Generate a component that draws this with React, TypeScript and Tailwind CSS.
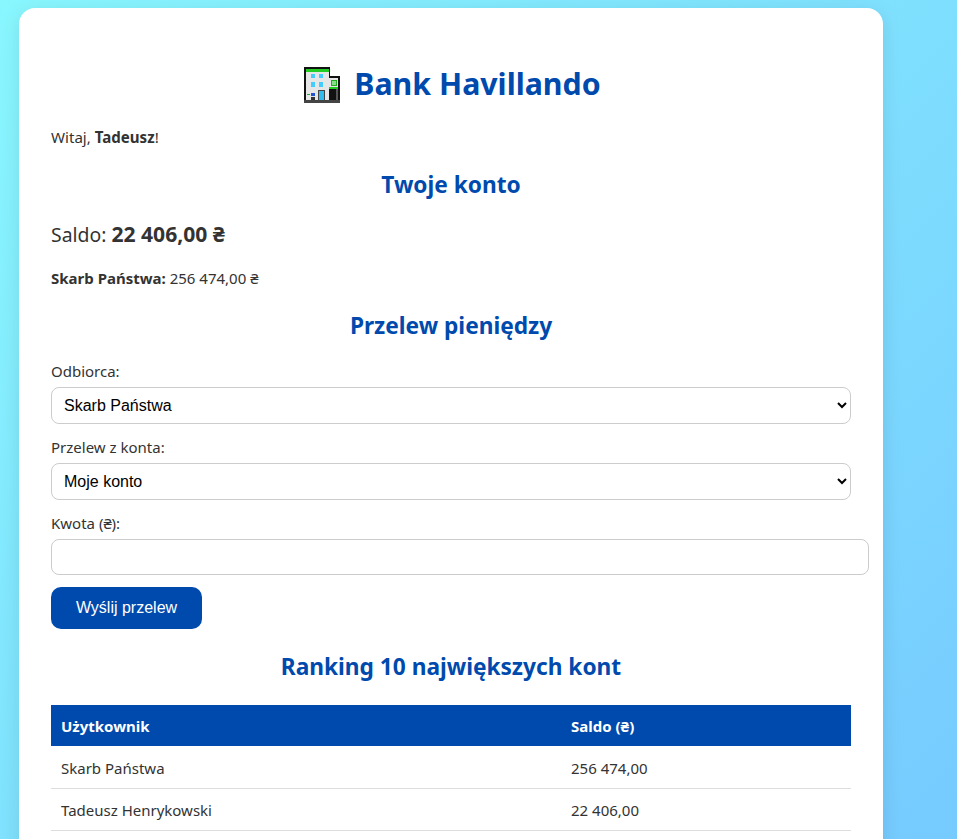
export default function App() {
  return (
    <div className="h-screen overflow-hidden bg-[linear-gradient(135deg,#89f7fe,#66a6ff)] bg-[length:957px_2300px] bg-no-repeat text-[#333] [font-family:'Noto_Sans',sans-serif]">
      <div className="ml-[19px] mt-2 min-h-[900px] w-[864px] rounded-2xl bg-white px-8 pt-8 shadow-[0_4px_20px_rgba(0,0,0,0.1)]">
        <h1 className="mt-[22px] mb-[21px] flex items-center justify-center gap-[14px] pl-[3px] text-[30.3px] leading-[44px] font-bold text-[#004aad]">
          <svg width="36" height="36" viewBox="0 0 36 36" className="mt-[2px] shrink-0" shapeRendering="crispEdges">
            <rect x="0" y="0" width="26" height="36" fill="#111" />
            <rect x="26" y="9" width="10" height="27" fill="#111" />
            <rect x="2" y="2" width="23" height="3" fill="#22cc22" />
            <rect x="2" y="5" width="23" height="28" fill="#e6e6e6" />
            <rect x="7" y="7" width="4" height="4" fill="#44ccff" />
            <rect x="15" y="7" width="4" height="4" fill="#44ccff" />
            <rect x="7" y="15" width="4" height="5" fill="#44ccff" />
            <rect x="15" y="15" width="4" height="5" fill="#44ccff" />
            <rect x="14" y="23" width="7" height="10" fill="#444" />
            <rect x="15" y="24" width="5" height="9" fill="#33bbee" />
            <rect x="3" y="27" width="3" height="1" fill="#22aa44" />
            <rect x="7" y="26" width="4" height="3" fill="#2255cc" />
            <rect x="7" y="30" width="4" height="3" fill="#333" />
            <rect x="25" y="11" width="9" height="9" fill="#e6e6e6" />
            <rect x="27" y="13" width="5" height="5" fill="#88dd88" stroke="#22aa22" strokeWidth="1" />
            <rect x="25" y="20" width="9" height="2" fill="#22cc22" />
            <rect x="32" y="22" width="2" height="11" fill="#555" />
            <rect x="0" y="33" width="36" height="3" fill="#444" />
          </svg>
          <span>Bank Havillando</span>
        </h1>
        <p className="mb-[22px] text-[15.1px] leading-[21px]">
          Witaj, <strong>Tadeusz</strong>!
        </p>
        <h2 className="mb-[21px] text-center text-[22.7px] leading-[30px] font-bold text-[#004aad]">Twoje konto</h2>
        <p className="mb-5 h-[27px] text-[19.4px] leading-[27px]">
          Saldo: <strong className="text-[21.1px] leading-none">22 406,00 ₴</strong>
        </p>
        <p className="mb-[23px] text-[15px] leading-[20px]">
          <strong>Skarb Państwa:</strong> 256 474,00 ₴
        </p>
        <h2 className="mb-5 text-center text-[22.7px] leading-[30px] font-bold text-[#004aad]">Przelew pieniędzy</h2>
        <form>
          <label className="block text-[15px] leading-[20px]">Odbiorca:</label>
          <select className="mt-[6px] h-[37px] w-[800px] rounded-lg border border-[#ccc] bg-white pl-2 text-[16px] text-black [font-family:'Liberation_Sans',sans-serif]">
            <option>Skarb Państwa</option>
          </select>
          <label className="mt-[13px] block text-[15px] leading-[20px]">Przelew z konta:</label>
          <select className="mt-[6px] h-[37px] w-[800px] rounded-lg border border-[#ccc] bg-white pl-2 text-[16px] text-black [font-family:'Liberation_Sans',sans-serif]">
            <option>Moje konto</option>
          </select>
          <label className="mt-[13px] block text-[15px] leading-[20px]">Kwota (₴):</label>
          <input className="mt-[6px] block h-[36px] w-[818px] rounded-lg border border-[#ccc] bg-white" />
          <button type="button" className="mt-3 block h-[42px] w-[151px] rounded-[10px] bg-[#004aad] text-[16px] text-white [font-family:'Liberation_Sans',sans-serif]">
            Wyślij przelew
          </button>
        </form>
        <h2 className="mt-[23px] mb-[23px] text-center text-[22.7px] leading-[30px] font-bold text-[#004aad]">Ranking 10 największych kont</h2>
        <table className="w-[800px] table-fixed border-collapse text-[15px]">
          <thead>
            <tr className="h-[41px] bg-[#004aad] text-left text-white">
              <th className="w-[510px] px-[10px] pt-[2px] font-bold">Użytkownik</th>
              <th className="px-[10px] pt-[2px] font-bold">Saldo (₴)</th>
            </tr>
          </thead>
          <tbody>
            <tr className="h-[42px] border-b border-[#ddd]">
              <td className="px-[10px] pt-[2px]">Skarb Państwa</td>
              <td className="px-[10px] pt-[2px]">256 474,00</td>
            </tr>
            <tr className="h-[42px] border-b border-[#ddd]">
              <td className="px-[10px] pt-[2px]">Tadeusz Henrykowski</td>
              <td className="px-[10px] pt-[2px]">22 406,00</td>
            </tr>
          </tbody>
        </table>
      </div>
    </div>
  );
}
